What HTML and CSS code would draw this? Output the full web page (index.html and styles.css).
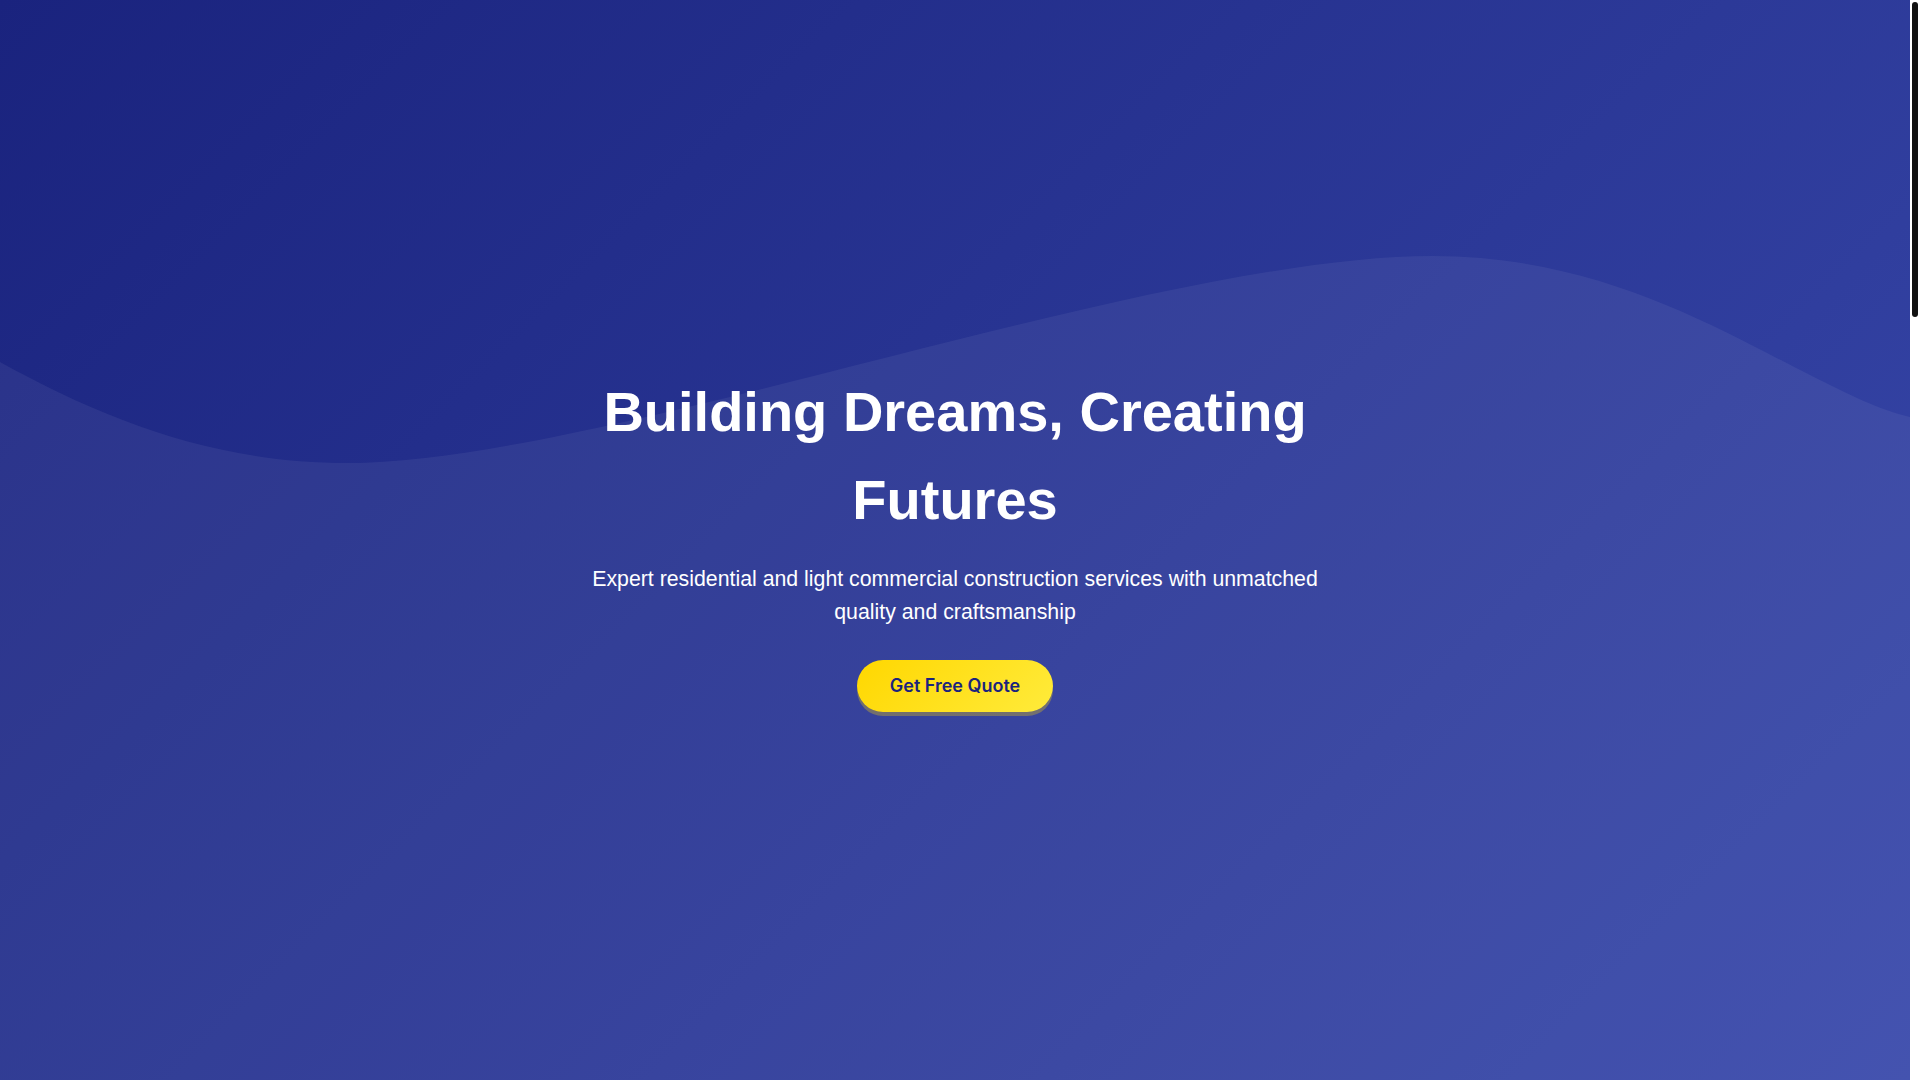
FILE: index.html
```html
<!DOCTYPE html>
<html lang="en">
<head>
<meta charset="utf-8">
<title>Building Dreams, Creating Futures</title>
<link rel="stylesheet" href="styles.css">
</head>
<body>
<section class="hero">
  <svg class="hero-wave" viewBox="0 0 1910 1080" preserveAspectRatio="none" aria-hidden="true">
    <path d="M0,362 C105,420 215,463 348,463 C600,463 1150,256 1433,256 C1600,256 1720,330 1810,375 C1850,395 1880,410 1910,417 L1910,1080 L0,1080 Z"/>
  </svg>
  <div class="hero-content">
    <h1 class="hero-title">Building Dreams, Creating Futures</h1>
    <p class="hero-subtitle">Expert residential and light commercial construction services with unmatched quality and craftsmanship</p>
    <a class="cta-button" href="#quote">Get Free Quote</a>
  </div>
</section>
<main class="page-rest"></main>
<div class="scroll-track" aria-hidden="true"><div class="scroll-thumb"></div></div>
</body>
</html>
```
FILE: styles.css
```css
html {
  overflow: hidden;
}

body {
  margin: 0;
  padding: 0 10px 0 0;
  font-family: "Liberation Sans", Arial, sans-serif;
  background: #ffffff;
}

.scroll-track {
  position: fixed;
  top: 0;
  right: 0;
  width: 10px;
  height: 100vh;
  background: #ffffff;
}
.scroll-thumb {
  margin: 2px 2px 0 2px;
  height: 315px;
  background: #111111;
  border-radius: 3px;
}

.hero {
  position: relative;
  height: 100vh;
  overflow: hidden;
  background: linear-gradient(135deg, #1a237e 0%, #3949ab 100%);
  display: flex;
  align-items: center;
  justify-content: center;
}

.hero-wave {
  position: absolute;
  left: 0;
  top: 0;
  width: 100%;
  height: 100%;
}
.hero-wave path {
  fill: rgba(255, 255, 255, 0.06);
}

.hero-content {
  position: relative;
  max-width: 770px;
  text-align: center;
  display: flex;
  flex-direction: column;
  align-items: center;
}

.hero-title {
  margin: 0 0 18px;
  font-size: 56px;
  font-weight: 700;
  line-height: 1.58;
  color: #ffffff;
}

.hero-subtitle {
  margin: 0 0 31px;
  font-size: 21.3px;
  line-height: 1.56;
  color: #ffffff;
}

.cta-button {
  display: inline-block;
  padding: 15px 33px;
  border-radius: 50px;
  background: linear-gradient(135deg, #ffd700 0%, #ffeb3b 100%);
  color: #1a237e;
  font-family: Inter, "Liberation Sans", sans-serif;
  font-size: 18px;
  font-weight: 600;
  line-height: 22px;
  text-decoration: none;
  box-shadow: 0 4px 0 rgba(255, 215, 0, 0.3);
}

.page-rest {
  display: block;
  height: 2576px;
}
```
